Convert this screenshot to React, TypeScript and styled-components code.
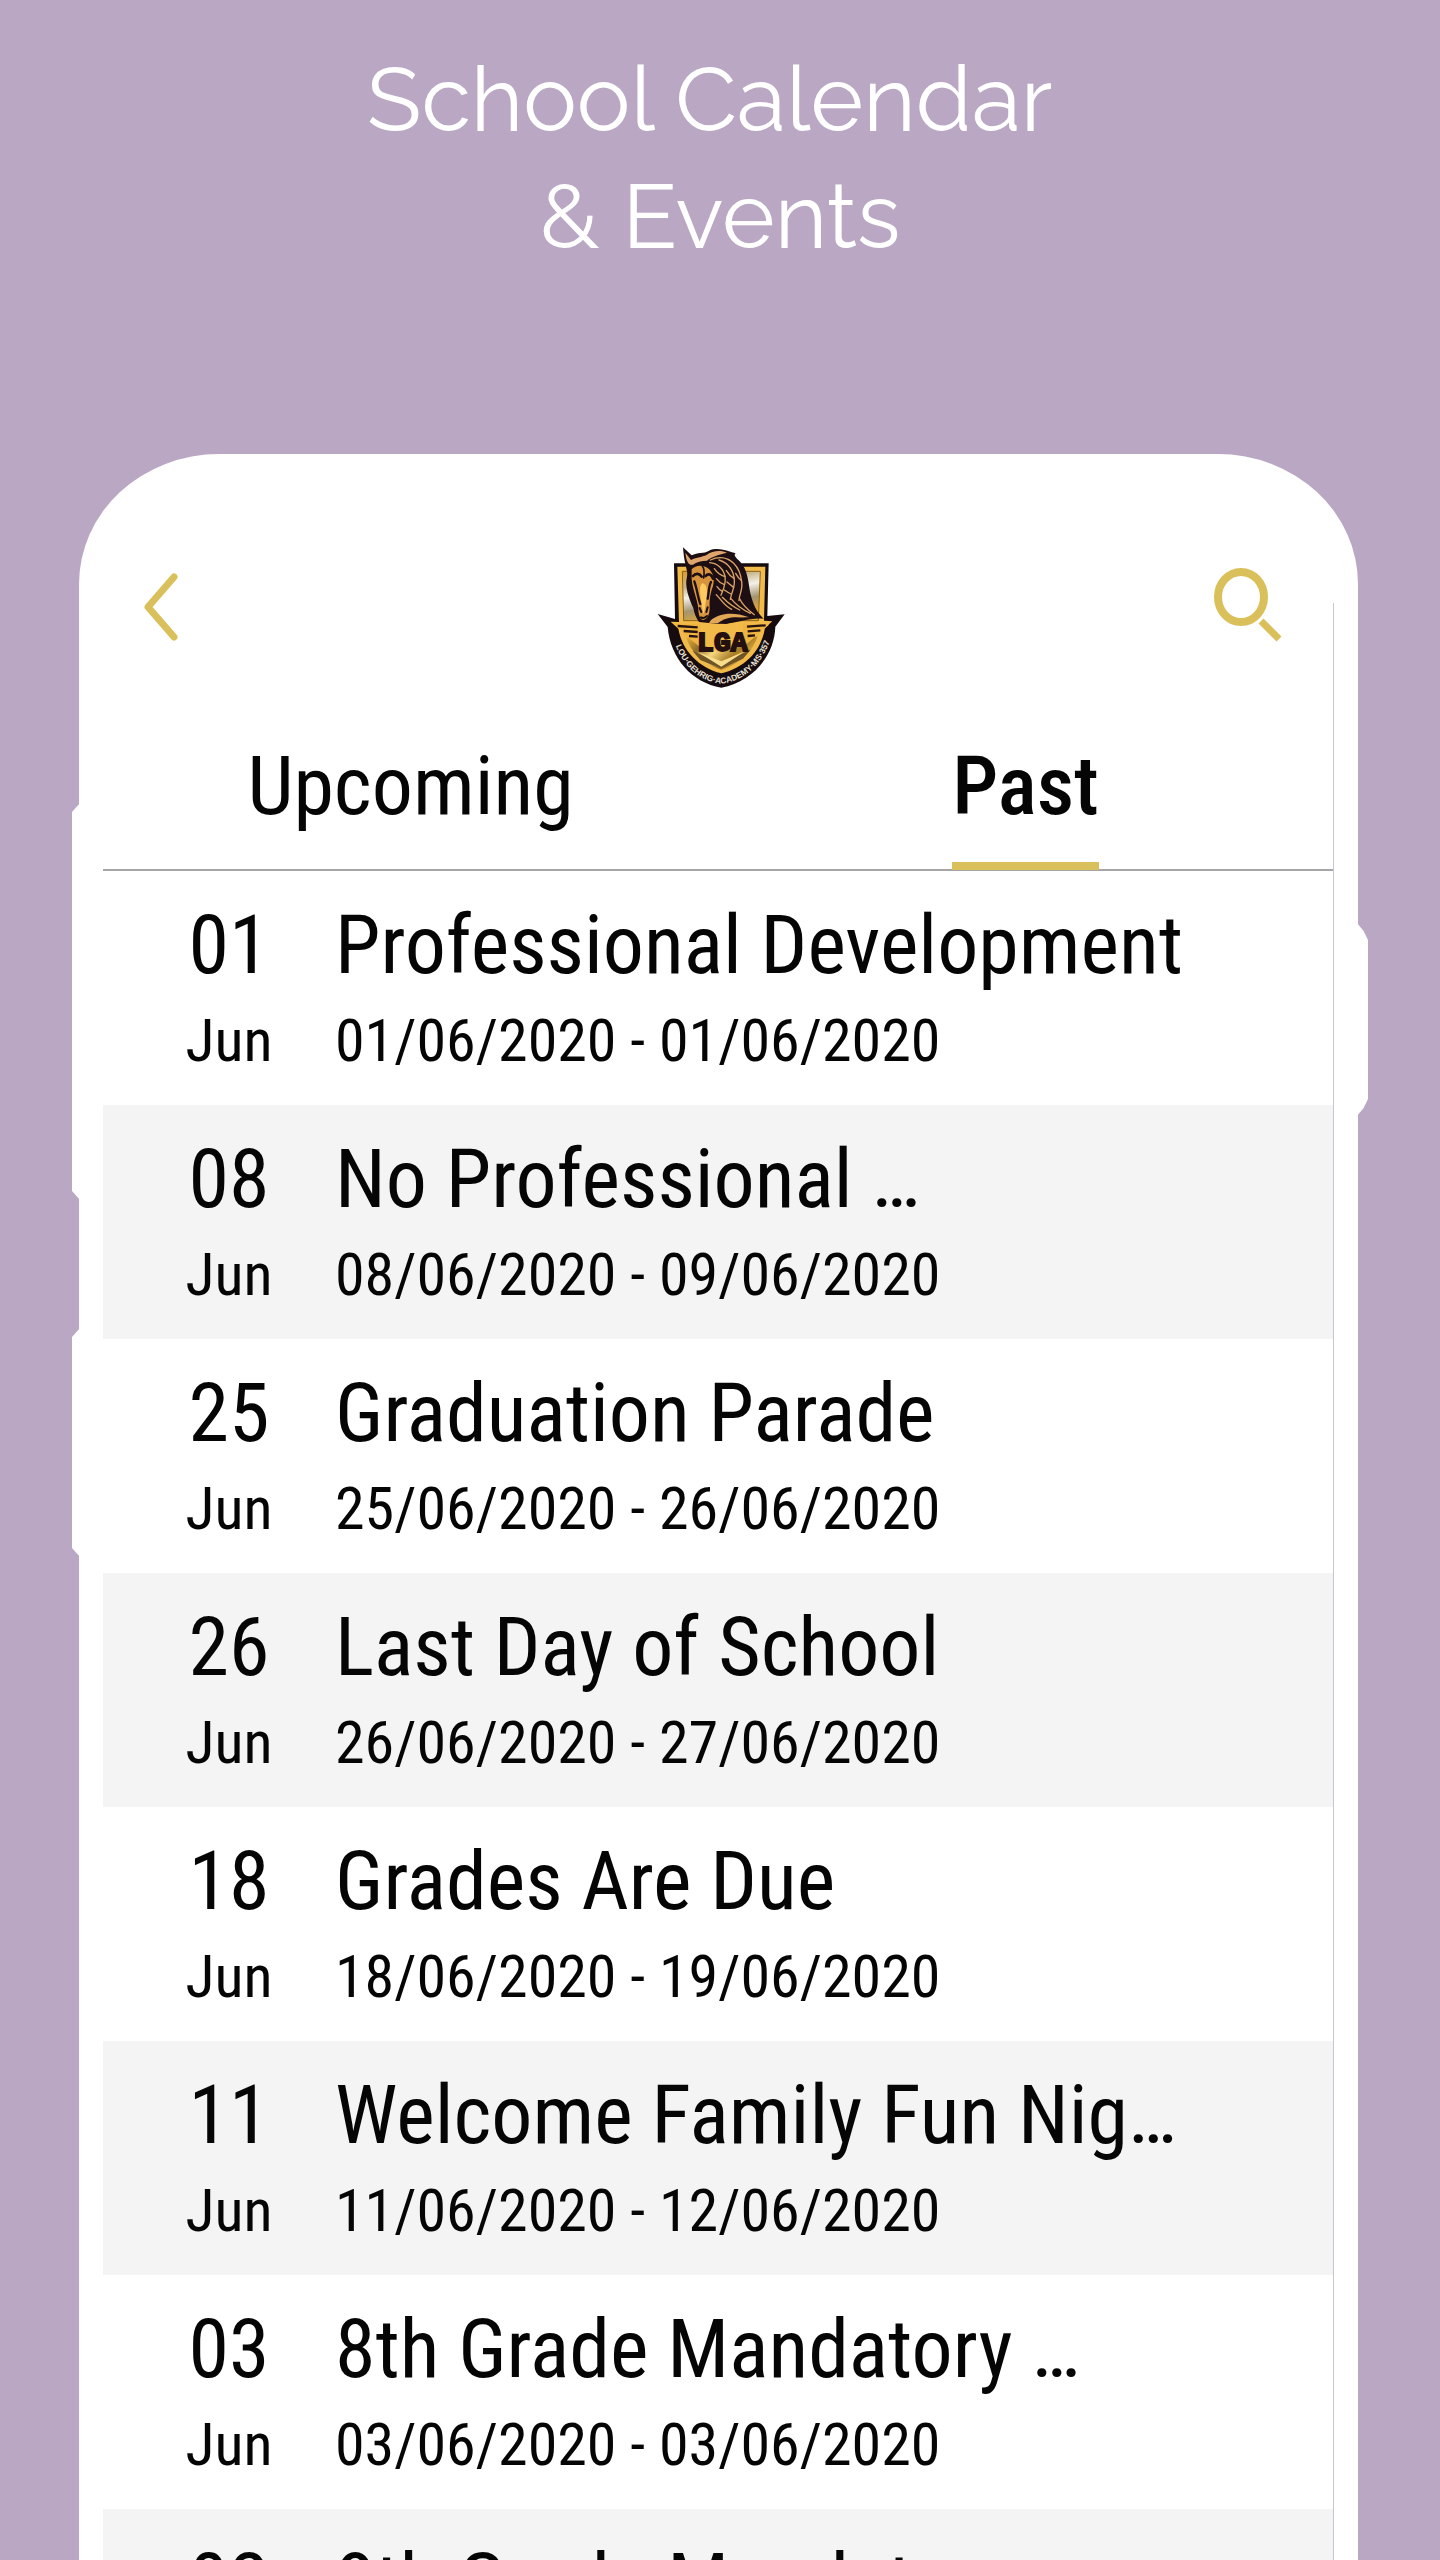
import React, { useState } from "react";
import styled, { createGlobalStyle } from "styled-components";

const color = {
  lilac: "#b9a7c3",
  gold: "#d9c05a",
  stripe: "#f4f4f4",
  rule: "#a6a6a6",
  edge: "#cdc1d4",
  ink: "#050505",
};

const GlobalStyle = createGlobalStyle`
  *, *::before, *::after { box-sizing: border-box; }
  body { margin: 0; background: ${color.lilac}; }
  button { font: inherit; color: inherit; background: none; border: 0; padding: 0; cursor: pointer; }
`;

const Page = styled.main`
  display: flex;
  flex-direction: column;
  height: 100vh;
  overflow: hidden;
  background: ${color.lilac};
  color: ${color.ink};
  font-family: "Roboto Condensed", Roboto, "Liberation Sans", sans-serif;
`;

const Headline = styled.h1`
  margin: 0;
  padding: 41px 0 179px;
  color: #fff;
  font-family: Raleway, Lato, "Open Sans", sans-serif;
  font-size: 90px;
  font-weight: 400;
  line-height: 117px;
  text-align: center;
  white-space: pre;
`;

const Phone = styled.section`
  position: relative;
  flex: 1 0 auto;
  margin: 0 82px 0 79px;
  padding: 58px 24px 0;
  background: #fff;
  border-radius: 140px 140px 0 0 / 130px 130px 0 0;
`;

const SideKey = styled.span<{ $side: "left" | "right"; $top: number; $length: number }>`
  position: absolute;
  top: ${(p) => p.$top}px;
  ${(p) => p.$side}: ${(p) => (p.$side === "left" ? -7 : -10)}px;
  width: ${(p) => (p.$side === "left" ? 8 : 11)}px;
  height: ${(p) => p.$length}px;
  background: #fff;
  clip-path: ${(p) =>
    p.$side === "left"
      ? "polygon(100% 0, 0 9px, 0 calc(100% - 9px), 100% 100%)"
      : "polygon(0 0, 60% 8px, 100% 17px, 100% calc(100% - 17px), 60% calc(100% - 8px), 0 100%)"};
`;

const Screen = styled.div`
  padding-right: 1px;
  background: linear-gradient(${color.edge}, ${color.edge}) right 91px / 1px 100% no-repeat;
`;

const TopBar = styled.header`
  display: grid;
  grid-template-columns: 1fr auto 1fr;
  padding: 18px 0 0 2px;
`;

const IconButton = styled.button<{ $end?: boolean }>`
  display: flex;
  align-items: center;
  justify-self: ${(p) => (p.$end ? "end" : "start")};
  height: 154px;
  padding: ${(p) => (p.$end ? "0 50px 0 38px" : "0 50px 0 38px")};
  svg { display: block; }
`;

const Tabs = styled.div`
  display: grid;
  grid-template-columns: 1fr 1fr;
  height: 171px;
  border-bottom: 2px solid ${color.rule};
`;

const Tab = styled.button`
  display: flex;
  align-items: flex-end;
  justify-content: center;
`;

const TabLabel = styled.span<{ $active: boolean }>`
  margin-bottom: -1px;
  padding-bottom: 28px;
  border-bottom: 8px solid ${(p) => (p.$active ? color.gold : "transparent")};
  font-size: 82px;
  font-weight: ${(p) => (p.$active ? 500 : 400)};
  line-height: 96px;
`;

const EventList = styled.ul`
  margin: 0;
  padding: 0;
  list-style: none;
`;

const EventRow = styled.li`
  display: grid;
  grid-template-columns: 124px 1fr;
  column-gap: 44px;
  row-gap: 12px;
  padding: 26px 40px 28px 64px;
  &:nth-child(even) { background: ${color.stripe}; }
`;

const Large = styled.span<{ $center?: boolean }>`
  font-size: 82px;
  line-height: 96px;
  white-space: nowrap;
  text-align: ${(p) => (p.$center ? "center" : "left")};
`;

const Small = styled.span<{ $center?: boolean }>`
  font-size: 60px;
  line-height: 72px;
  white-space: nowrap;
  text-align: ${(p) => (p.$center ? "center" : "left")};
`;

const BackIcon = () => (
  <svg width="36" height="70" viewBox="0 0 36 70" fill="none" stroke={color.gold} strokeWidth="7" strokeLinecap="round" strokeLinejoin="round" aria-hidden="true">
    <path d="M31 5L5 35L31 65" />
  </svg>
);

const SearchIcon = () => (
  <svg width="70" height="82" viewBox="0 0 70 82" fill="none" stroke={color.gold} aria-hidden="true">
    <ellipse cx="28" cy="31" rx="23" ry="25" strokeWidth="8" />
    <path d="M48 55L66 73" strokeWidth="7" />
  </svg>
);

const Crest = () => (
  <svg width="160" height="170" viewBox="0 0 480 510" role="img" aria-label="Lou Gehrig Academy crest">
    <defs>
      <linearGradient id="panel" x1="0" y1="0" x2="0.35" y2="1">
        <stop offset="0" stopColor="#d99a26" />
        <stop offset="0.3" stopColor="#c9b88e" />
        <stop offset="0.5" stopColor="#f4f1ea" />
        <stop offset="0.75" stopColor="#a39470" />
        <stop offset="1" stopColor="#e0a835" />
      </linearGradient>
      <linearGradient id="base" x1="0" y1="0" x2="1" y2="0.5">
        <stop offset="0" stopColor="#f0b63e" />
        <stop offset="0.3" stopColor="#8c6b2a" />
        <stop offset="0.5" stopColor="#f6d77e" />
        <stop offset="0.75" stopColor="#a77b26" />
        <stop offset="1" stopColor="#f3bd48" />
      </linearGradient>
      <path id="motto" d="M102 318C122 404 178 454 247 461C318 453 376 400 401 306" />
    </defs>
    <path d="M105 100H389L385 258L437 253L409 290C406 380 338 456 247 473C158 458 94 384 86 291L56 252L108 267Z" fill="#160c10" />
    <path d="M115 110H379L375 272L400 274L378 294C366 362 320 412 247 430C178 412 130 362 118 296L95 275L120 276Z" fill="#f2ba49" />
    <path d="M130 124H364L358 272L134 272Z" fill="url(#panel)" stroke="#8a6119" strokeWidth="3" />
    <path d="M140 320C156 366 190 400 247 420C306 400 342 364 356 318L247 370Z" fill="url(#base)" />
    <path d="M160 362L247 402L336 358L312 386L247 416L184 390Z" fill="#6f5426" />
    <path d="M176 366L247 394L318 364L247 410Z" fill="#f8dd8c" />

    <path d="M132 52L158 76C176 66 194 72 210 62C238 50 266 64 290 70C282 76 292 84 302 94C328 120 328 162 334 190C342 222 352 246 374 266C330 262 300 280 240 282L180 276C170 262 166 250 163 234C150 206 136 168 144 140C149 123 136 110 132 52Z" fill="#1c0e12" />
    <path d="M139 68L156 90C168 82 188 82 204 74C220 62 246 60 264 68C240 74 218 80 204 92C188 92 172 96 162 104C148 108 142 92 139 68Z" fill="#e0a56c" />
    <path d="M158 118C170 104 190 104 206 114C222 126 228 146 222 168C214 190 211 208 212 234C212 252 206 268 192 270C182 268 178 252 178 234C174 206 160 176 158 148Z" fill="#d8943c" />
    <path d="M190 160C204 162 206 180 202 206C198 226 198 244 193 252C190 236 186 214 184 196C182 180 182 166 190 160Z" fill="#ffcb60" />
    <g fill="none" stroke="#1c0e12" strokeLinecap="round">
      <path d="M162 138C170 128 182 130 188 140M200 138C208 128 218 134 222 146" strokeWidth="8" />
      <path d="M166 154C174 176 176 200 184 222M216 156C208 172 210 188 206 206" strokeWidth="7" />
      <path d="M182 234L187 246M206 232L202 246M186 262C192 266 198 264 204 258" strokeWidth="6" />
      <path d="M190 108C198 118 196 130 194 144" strokeWidth="5" />
    </g>
    <path d="M214 272C240 250 280 244 330 262C300 262 272 268 252 280H210Z" fill="#e2a657" />
    <path d="M236 280C256 262 290 258 316 264L290 274L262 282Z" fill="#1c0e12" />
    <g fill="none" stroke="#d9a266" strokeWidth="4" strokeLinecap="round">
      <path d="M214 90C240 78 266 82 284 100C300 116 306 136 308 156" />
      <path d="M212 98C236 100 254 116 258 140C262 164 252 178 246 196" />
      <path d="M240 90C268 98 284 122 286 150C288 174 276 190 274 208" />
      <path d="M258 140C244 136 234 128 226 116M256 164C246 160 238 154 232 146M250 184C242 180 238 176 234 170" />
      <path d="M286 146C276 140 268 132 262 122M284 172C276 166 270 162 264 156M276 192C268 188 262 184 256 180" />
      <path d="M308 152C300 146 294 138 290 130M308 156C312 180 300 194 300 212" />
      <path d="M232 194C246 208 256 228 278 238M250 202C264 216 280 230 302 240M276 206C290 224 308 238 334 250M302 206C310 224 322 236 346 254" />
    </g>
    <path d="M108 284L184 281V352L152 326Z" fill="#f0b440" />
    <path d="M390 284L312 281V352L346 322Z" fill="#f0b440" />
    <g stroke="#24130f" strokeWidth="7">
      <path d="M116 288L176 292M134 303L176 306M150 318L176 320" />
      <path d="M380 286L324 290M364 301L326 304M348 316L326 318" />
    </g>
    <text x="250" y="362" fill="#24100e" stroke="#24100e" strokeWidth="6" fontFamily="'Liberation Mono', monospace" fontWeight="700" fontSize="84" textAnchor="middle">
      LGA
    </text>
    <text fill="#e9e1d6" fontFamily="'Liberation Sans', sans-serif" fontWeight="700" fontSize="25">
      <textPath href="#motto" startOffset="50%" textAnchor="middle">LOU·GEHRIG·ACADEMY·MS·357</textPath>
    </text>
  </svg>
);

const events = [
  { day: "01", title: "Professional Development", dates: "01/06/2020 - 01/06/2020" },
  { day: "08", title: "No Professional …", dates: "08/06/2020 - 09/06/2020" },
  { day: "25", title: "Graduation Parade", dates: "25/06/2020 - 26/06/2020" },
  { day: "26", title: "Last Day of School", dates: "26/06/2020 - 27/06/2020" },
  { day: "18", title: "Grades Are Due", dates: "18/06/2020 - 19/06/2020" },
  { day: "11", title: "Welcome Family Fun Nig…", dates: "11/06/2020 - 12/06/2020" },
  { day: "03", title: "8th Grade Mandatory …", dates: "03/06/2020 - 03/06/2020" },
  { day: "02", title: "8th Grade Mandatory …", dates: "02/06/2020 - 02/06/2020" },
];

const tabs = ["Upcoming", "Past"];

export default function App() {
  const [active, setActive] = useState("Past");
  return (
    <Page>
      <GlobalStyle />
      <Headline>{"School Calendar \n& Events"}</Headline>
      <Phone>
        <SideKey $side="left" $top={349} $length={397} />
        <SideKey $side="left" $top={874} $length={229} />
        <SideKey $side="right" $top={469} $length={193} />
        <Screen>
          <TopBar>
            <IconButton type="button" aria-label="Back"><BackIcon /></IconButton>
            <Crest />
            <IconButton type="button" aria-label="Search" $end><SearchIcon /></IconButton>
          </TopBar>
          <Tabs role="tablist">
            {tabs.map((name) => (
              <Tab key={name} type="button" role="tab" aria-selected={active === name} onClick={() => setActive(name)}>
                <TabLabel $active={active === name}>{name}</TabLabel>
              </Tab>
            ))}
          </Tabs>
          <EventList>
            {events.map((event) => (
              <EventRow key={event.day}>
                <Large $center>{event.day}</Large>
                <Large>{event.title}</Large>
                <Small $center>Jun</Small>
                <Small>{event.dates}</Small>
              </EventRow>
            ))}
          </EventList>
        </Screen>
      </Phone>
    </Page>
  );
}
